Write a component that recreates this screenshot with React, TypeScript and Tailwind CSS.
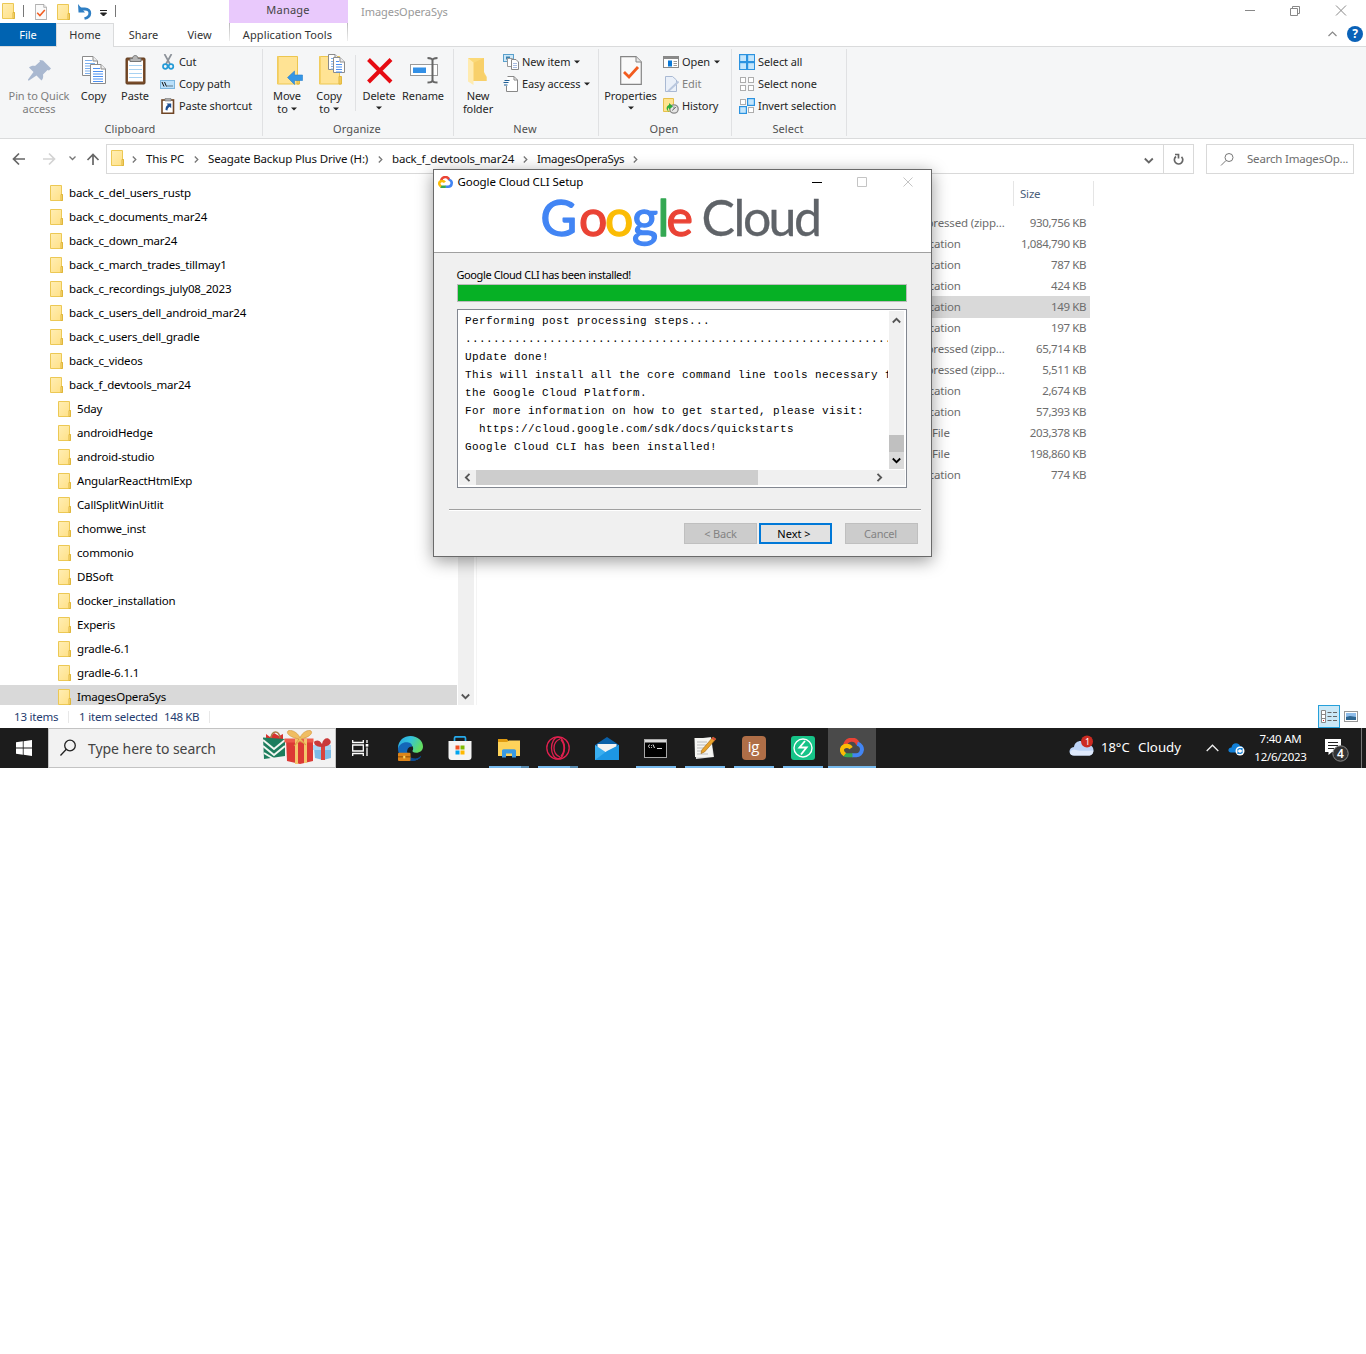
import React from "react";

type Kids = { children?: React.ReactNode };

/* ---------- icons ---------- */

const Folder = ({ className = "" }: { className?: string }) => (
  <svg width="13" height="16" viewBox="0 0 13 16" className={"shrink-0 " + className}>
    <defs>
      <linearGradient id="fold" x1="0" y1="0" x2="1" y2="1">
        <stop offset="0" stopColor="#ffeeb4" />
        <stop offset="1" stopColor="#ffe085" />
      </linearGradient>
    </defs>
    <path d="M.5.5h11v9h1v6H.5z" fill="url(#fold)" stroke="#ecc854" />
    <path d="M11 9.5v6h1.500v-6z" fill="#ffe089" stroke="#dfb63c" />
  </svg>
);

const Page = ({ x = 0, y = 0, w = 16, h = 20, line = "#7cb0ee" }: { x?: number; y?: number; w?: number; h?: number; line?: string }) => (
  <g transform={`translate(${x} ${y})`}>
    <path d={`M.5.5H${w - 5}L${w - 0.5} 5V${h - 0.5}H.5z`} fill="#fff" stroke="#8b8b8b" />
    <path d={`M${w - 5} .5V5H${w - 0.5}`} fill="#eee" stroke="#8b8b8b" />
    <path d={`M3 4.500H${w - 6}M3 7.500H${w - 3}M3 10H${w - 3}M3 12.500H${w - 3}M3 15H${w - 3}${h > 18 ? `M3 17.500H${w - 3}` : ""}`} stroke={line} />
  </g>
);

const CheckPage = ({ w, h }: { w: number; h: number }) => (
  <svg width={w} height={h} viewBox="0 0 22 29" className="shrink-0">
    <path d="M.7.7H16L21.3 6V28.3H.7z" fill="#fafafa" stroke="#858585" strokeWidth="1.2" />
    <path d="M16 .7V6h5.3" fill="#e8e8e8" stroke="#858585" />
    <path d="M4 16l5 5 9-10" fill="none" stroke="#f25c1f" strokeWidth="2.8" />
  </svg>
);

const BigFolder = ({ children }: Kids) => (
  <svg width="32" height="32" viewBox="0 0 32 32" className="overflow-visible">
    <path d="M6.500 1.500h20v20h2v7.500h-22z" fill="#ffe394" stroke="#ecc650" />
    <path d="M26 21.500v7.500h2.200v-7.500z" fill="#f9d264" stroke="#e0b53c" />
    <path d="M6.500 1.500h1.500v27.500h-1.500z" fill="#f6d26a" />
    {children}
  </svg>
);

const Pin = () => (
  <svg width="32" height="32" viewBox="0 0 32 32">
    <path d="M20 5l8 8-2 2-1.500-.5-4.500 4.500c.5 2.500 0 4.500-1.500 6l-5-5L6 25H5v-1l5.500-7.500-4.500-4.500c1.500-1.500 4-2 6-1.500l5-4.500-.5-1.500z" transform="translate(0 0.500)" fill="#a9b8d0" />
  </svg>
);
const CopyBig = () => (
  <svg width="32" height="32" viewBox="0 0 32 32">
    <Page x={4} y={1} w={16} h={20} />
    <Page x={12} y={9} w={16} h={20} line="#4d90f0" />
  </svg>
);
const PasteBig = () => (
  <svg width="32" height="32" viewBox="0 0 32 32">
    <rect x="7" y="3" width="19" height="26" rx="1" fill="#7a4d2b" stroke="#5f3a1d" />
    <path d="M9 5.500h15v21H9z" fill="#fff" />
    <path d="M10 10.500h13M10 14.500h13M10 18.500h13M10 22.500h13" stroke="#a8d2f2" />
    <path d="M11 3.500h2.500c0-4 5.500-4 5.500 0H22v3H11z" fill="#b5b5b5" stroke="#777" />
  </svg>
);
const Cut = () => (
  <svg width="16" height="16" viewBox="0 0 16 16">
    <path d="M4.500 0L10 10M11.500 0L6 10" stroke="#8c9299" strokeWidth="1.700" />
    <circle cx="5.300" cy="12.500" r="2.300" fill="none" stroke="#249bd7" strokeWidth="1.700" />
    <circle cx="11" cy="12.500" r="2.300" fill="none" stroke="#249bd7" strokeWidth="1.700" />
  </svg>
);
const CopyPath = () => (
  <svg width="16" height="16" viewBox="0 0 16 16">
    <rect x=".5" y="4.500" width="14" height="8" fill="#b9e0fb" stroke="#7cb6de" />
    <path d="M2 6l2 4.500M4.500 6l2 4.500" stroke="#111" />
    <path d="M7.500 10h1M9.500 10h1M11.500 10h1" stroke="#111" strokeWidth="1.200" />
  </svg>
);
const PasteShortcut = () => (
  <svg width="16" height="16" viewBox="0 0 16 16">
    <rect x="2" y="2" width="11.500" height="13.300" fill="#fff" stroke="#6f4525" strokeWidth="1.600" />
    <path d="M5 .5h6v2.500H5z" fill="#aaa" stroke="#777" strokeWidth=".6" />
    <path d="M5.500 12c0-3 1-4.500 2.500-5L6.500 5.500h4.700v4.700L9.700 8.700C8.300 9.500 7.500 10.500 7.500 12.500z" fill="#1c4f93" />
  </svg>
);
const MoveTo = () => (
  <BigFolder>
    <path d="M16.500 22.500l7-6.500v4h8v5.500h-8v4z" fill="#3496e6" stroke="#2a82cc" strokeWidth=".6" />
  </BigFolder>
);
const CopyTo = () => (
  <BigFolder>
    <Page x={15} y={-1} w={12} h={16} />
    <Page x={20} y={2} w={12} h={16} line="#4d90f0" />
  </BigFolder>
);
const DeleteX = () => (
  <svg width="32" height="32" viewBox="0 0 32 32">
    <path d="M5.500 4.500L28 27M28 4.500L5.500 27" stroke="#e60b12" strokeWidth="4" />
  </svg>
);
const Rename = () => (
  <svg width="32" height="32" viewBox="0 0 32 32">
    <rect x="3.500" y="9.500" width="27" height="11" fill="#fff" stroke="#999" />
    <rect x="6" y="12.500" width="13" height="5.500" fill="#3390e6" />
    <path d="M25.500 4v22M20.500 3c3 0 5 .5 5 2.500 0-2 2-2.500 5-2.500M20.500 27.500c3 0 5-.5 5-2.500 0 2 2 2.500 5 2.500" fill="none" stroke="#666" strokeWidth="2" />
  </svg>
);
const NewFolder = () => (
  <svg width="32" height="32" viewBox="0 0 32 32">
    <path d="M6 3h16v14l2.500 4.500V26H11z" fill="#fbd978" />
    <path d="M11 8l11-5v16l2.500 3v4H11z" fill="#f8d06a" />
    <path d="M6 3l5.500 4.500V30L6 26.500z" fill="#ffebb0" />
  </svg>
);
const NewItem = () => (
  <svg width="16" height="16" viewBox="0 0 16 16">
    <rect x=".5" y=".5" width="10" height="7" fill="#cde8f8" stroke="#5aa0cc" />
    <path d="M3 2.500h4v3H3z" fill="#3c82b0" />
    <path d="M4.500 4.500h5v8h-5z" fill="#fff" stroke="#999" />
    <path d="M8.500 5.500H13L15.500 8v7.500h-7z" fill="#fff" stroke="#888" />
    <path d="M10 9.500h4M10 11.500h4M10 13.500h4" stroke="#a8bce0" />
  </svg>
);
const EasyAccess = () => (
  <svg width="16" height="16" viewBox="0 0 16 16">
    <path d="M4.500.5H11L14.500 4v11.500h-11V10" fill="#fff" stroke="#888" />
    <path d="M11 .5V4h3.500" fill="none" stroke="#888" />
    <path d="M1.500 4.500h5M.5 6.500h5M1 9h3.500" stroke="#1f5f96" strokeWidth="1.200" />
  </svg>
);
const OpenIcon = () => (
  <svg width="16" height="16" viewBox="0 0 16 16">
    <rect x=".5" y="2.500" width="15" height="11" fill="#fff" stroke="#888" />
    <path d="M1 3h14v2H1z" fill="#8a8a8a" />
    <path d="M5 6.500h4v6H5z" fill="#0a78d6" />
    <path d="M10.500 7.500H14M10.500 9.500H14M10.500 11.500H14" stroke="#999" />
  </svg>
);
const EditIcon = () => (
  <svg width="16" height="16" viewBox="0 0 16 16">
    <path d="M2.500.5h7L13.500 4v11.500h-11z" fill="#eaf0f9" stroke="#a9b9d3" />
    <path d="M15.500 5.500L6.500 14l-1.500 1" stroke="#b9c7de" strokeWidth="2" />
  </svg>
);
const HistoryIcon = () => (
  <svg width="16" height="16" viewBox="0 0 16 16">
    <path d="M.5.5h10v13H.5z" fill="#ffe38f" stroke="#e6c04b" />
    <circle cx="11" cy="11" r="4.200" fill="#e6e6e6" stroke="#8a8a8a" strokeWidth="1.300" />
    <path d="M11 8.500V11l-2 1.500M11 11l2-2" fill="none" stroke="#777" />
    <path d="M6.500 14C2.500 12 3 8 6 7V5l4 3.500L6 11.500v-2c-1.500 1-1.500 3 .5 4.500z" fill="#2fae3b" />
  </svg>
);
const Tiles = ({ on, joined }: { on: number[]; joined?: boolean }) => (
  <svg width="16" height="16" viewBox="0 0 16 16">
    {[0, 1, 2, 3].map((i) => {
      const x = (i % 2) * 8;
      const y = Math.floor(i / 2) * 8;
      const lit = on.includes(i);
      return lit ? (
        <rect key={i} x={x + 0.6} y={y + 0.6} width={joined ? 7 : 6.8} height={joined ? 7 : 6.8} fill="#c5e6fc" stroke="#2c93e0" strokeWidth="1.200" />
      ) : (
        <rect key={i} x={x + 1.5} y={y + 1.5} width="5" height="5" fill="#fff" stroke="#adadad" />
      );
    })}
  </svg>
);

const Caret = ({ className = "" }: { className?: string }) => (
  <svg width="6" height="4" viewBox="0 0 6 4" className={className}>
    <path d="M0 .5h6l-3 3z" fill="#222" />
  </svg>
);

const Chevron = ({ d, w = 9, h = 9, color = "#555", sw = 1.8 }: { d: string; w?: number; h?: number; color?: string; sw?: number }) => (
  <svg width={w} height={h} viewBox={`0 0 ${w} ${h}`} className="shrink-0">
    <path d={d} fill="none" stroke={color} strokeWidth={sw} />
  </svg>
);

const GCloud = ({ s }: { s: number }) => (
  <svg width={s} height={s * 0.82} viewBox="0 0 25 20.500">
    <g fill="none" strokeWidth="4.200">
      <path d="M5.200 8.500C6.300 0 16.500-.3 18.800 6.600" stroke="#ea4335" />
      <path d="M18 6c3.700 1 5.200 4 4.800 6.500-.4 3.200-2.800 5.400-5.800 5.400h-4.500" stroke="#4285f4" />
      <path d="M13 18H7.500c-1.200 0-2-.2-3-.8" stroke="#34a853" />
      <path d="M5 17.400C-.2 13.500 2 8.300 7 8.200c2 0 3.500.8 4.500 2.300" stroke="#fbbc05" />
    </g>
  </svg>
);

/* ---------- ribbon ---------- */

const Big = ({ icon, lines, drop, w, dim }: { icon: React.ReactNode; lines: string[]; drop?: boolean; w: string; dim?: boolean }) => (
  <div className={"flex flex-col items-center " + w}>
    <div className="mb-0.5 h-8">{icon}</div>
    {lines.map((l, i) => (
      <div key={i} className={"flex items-center whitespace-nowrap leading-[13px] " + (dim ? "text-[#7d7d7d]" : "")}>
        {l}
        {drop && i === 1 && <Caret className={l ? "ml-[3px]" : "mt-1"} />}
      </div>
    ))}
  </div>
);

const Small = ({ icon, text, drop, dim }: { icon: React.ReactNode; text: string; drop?: boolean; dim?: boolean }) => (
  <div className="flex h-[22px] items-center whitespace-nowrap">
    {icon}
    <span className={"ml-[3px] " + (dim ? "text-[#808080]" : "")}>{text}</span>
    {drop && <Caret className="ml-1" />}
  </div>
);

const Group = ({ label, w, children }: Kids & { label: string; w: string }) => (
  <div className={"flex shrink-0 " + w}>
    <div className="flex flex-1 flex-col">
      <div className="flex h-[74px]">{children}</div>
      <div className="pr-0.5 text-center leading-4 tracking-[0.1px] text-[#505050]">{label}</div>
    </div>
    <div className="mt-0.5 h-[87px] w-px bg-[#e0e1e3]" />
  </div>
);

const Stack = ({ children, className = "" }: Kids & { className?: string }) => <div className={"flex flex-col pt-1 " + className}>{children}</div>;

const Ribbon = () => (
  <div className="flex h-[92px] border-b border-[#dadbdc] bg-[#f5f6f7] text-[11px] tracking-[-0.1px] text-[#262626]">
    <Group label="Clipboard" w="w-[263px]">
      <div className="flex pt-2">
        <Big w="ml-1 w-[70px]" icon={<Pin />} lines={["Pin to Quick", "access"]} dim />
        <Big w="w-[39px]" icon={<CopyBig />} lines={["Copy"]} />
        <Big w="ml-px w-[42px]" icon={<PasteBig />} lines={["Paste"]} />
      </div>
      <Stack className="ml-1">
        <Small icon={<Cut />} text="Cut" />
        <Small icon={<CopyPath />} text="Copy path" />
        <Small icon={<PasteShortcut />} text="Paste shortcut" />
      </Stack>
    </Group>
    <Group label="Organize" w="w-[191px]">
      <div className="flex pt-2">
        <Big w="ml-[3px] w-[42px]" icon={<MoveTo />} lines={["Move", "to"]} drop />
        <Big w="w-[42px]" icon={<CopyTo />} lines={["Copy", "to"]} drop />
        <div className="ml-[5px] h-[56px] w-px bg-[#e0e1e3]" />
        <Big w="ml-px w-11" icon={<DeleteX />} lines={["Delete", ""]} drop />
        <Big w="w-11" icon={<Rename />} lines={["Rename"]} />
      </div>
    </Group>
    <Group label="New" w="w-[145px]">
      <div className="flex pt-2">
        <Big w="ml-[3px] w-[42px]" icon={<NewFolder />} lines={["New", "folder"]} />
      </div>
      <Stack className="ml-1">
        <Small icon={<NewItem />} text="New item" drop />
        <Small icon={<EasyAccess />} text="Easy access" drop />
      </Stack>
    </Group>
    <Group label="Open" w="w-[133px]">
      <div className="flex pt-2">
        <Big w="ml-[3px] w-[57px] mr-px" icon={<div className="pt-px"><CheckPage w={22} h={29} /></div>} lines={["Properties", ""]} drop />
      </div>
      <Stack className="ml-[3px]">
        <Small icon={<OpenIcon />} text="Open" drop />
        <Small icon={<EditIcon />} text="Edit" dim />
        <Small icon={<HistoryIcon />} text="History" />
      </Stack>
    </Group>
    <Group label="Select" w="w-[115px]">
      <Stack className="ml-[7px]">
        <Small icon={<Tiles on={[0, 1, 2, 3]} joined />} text="Select all" />
        <Small icon={<Tiles on={[]} />} text="Select none" />
        <Small icon={<Tiles on={[1, 2]} />} text="Invert selection" />
      </Stack>
    </Group>
  </div>
);

/* ---------- title + tabs ---------- */

const TitleBar = () => (
  <div className="flex h-[23px] text-[11px]">
    <div className="flex w-[229px] items-start pl-0.5 pt-[3px]">
      <Folder />
      <div className="ml-2 mt-0.5 h-3 w-px bg-[#777]" />
      <div className="ml-[11px] mt-px"><CheckPage w={12} h={16} /></div>
      <Folder className="ml-[10px] mt-px" />
      <svg width="14" height="16" viewBox="0 0 14 16" className="ml-2 mt-px">
        <path d="M2 5h5c6.500 0 6.500 8-.5 9.500" fill="none" stroke="#2f7fc4" strokeWidth="2.800" />
        <path d="M0 0l.5 8.500H7z" fill="#2f7fc4" />
      </svg>
      <svg width="7" height="7" viewBox="0 0 7 7" className="ml-2 mt-[7px]">
        <path d="M0 .5h7M.5 3h6l-3 3z" stroke="#222" strokeWidth="1" fill="#222" />
      </svg>
      <div className="ml-2 mt-0.5 h-3 w-px bg-[#777]" />
    </div>
    <div className="w-[119px] bg-[#e9c9fc] pr-px text-center leading-[20px] tracking-[0.2px] text-[#444]">Manage</div>
    <div className="flex-1 pl-[13px] leading-6 tracking-[-0.05px] text-[#999]">ImagesOperaSys</div>
    <div className="flex w-[126px] items-start pt-[5px]">
      <svg width="110" height="12" viewBox="0 0 110 12" fill="none" stroke="#888">
        <path d="M5 5.500h10M50.500 3.500h7v7h-7zM52.500 3V1.500h7v7H58M96 .5l10 10M106 .5l-10 10" />
      </svg>
    </div>
  </div>
);

const Tabs = () => (
  <div className="flex h-6 border-b border-[#dadbdc] text-[11px] leading-6 text-[#333]">
    <div className="h-[23px] w-14 bg-[#0063b1] text-center text-white">File</div>
    <div className="z-10 h-6 w-[58px] border-x border-t border-[#dadbdc] bg-[#f5f6f7] text-center leading-[22px]">Home</div>
    <div className="w-[59px] text-center">Share</div>
    <div className="w-[53px] text-center">View</div>
    <div className="ml-[3px] flex h-[18px] w-[119px] justify-between">
      <div className="w-px bg-gradient-to-b from-[#bbb] to-[#eee]" />
      <span className="whitespace-nowrap pr-0.5 tracking-[0.1px]">Application Tools</span>
      <div className="w-px bg-gradient-to-b from-[#bbb] to-[#eee]" />
    </div>
    <div className="ml-auto flex items-start pt-[3px]">
      <div className="mr-[10px] mt-1"><Chevron d="M.5 6l4-4 4 4" color="#888" sw={1.2} /></div>
      <div className="mr-[3px] h-4 w-4 rounded-full bg-[#0a62b8] text-center text-[12px] font-bold leading-4 text-white">?</div>
    </div>
  </div>
);

/* ---------- address bar ---------- */

const Sep = ({ className = "" }: { className?: string }) => (
  <svg width="5" height="7" viewBox="0 0 5 7" className={"shrink-0 " + className}>
    <path d="M.8.5l3 3-3 3" fill="none" stroke="#777" strokeWidth="1.300" />
  </svg>
);

const AddressBar = () => (
  <div className="flex h-[42px] items-start pt-[5px] text-[11.500px] tracking-[-0.15px] text-[#111]">
    <div className="flex h-[30px] w-[106px] shrink-0 items-center">
      <svg width="106" height="30" viewBox="0 0 106 30" fill="none">
        <path d="M25 15H14M19 9.500L13.500 15l5.500 5.500" stroke="#666" strokeWidth="1.700" />
        <path d="M43 15h11M49 9.500l5.500 5.500-5.500 5.500" stroke="#d3d3d3" strokeWidth="1.700" />
        <path d="M69.500 12.500l3 3 3-3" stroke="#777" strokeWidth="1.300" />
        <path d="M93 21V10.500M87.500 16l5.500-5.500 5.500 5.500" stroke="#666" strokeWidth="1.700" />
      </svg>
    </div>
    <div className="flex h-[30px] w-[1088px] shrink-0 items-center whitespace-nowrap border border-[#d9d9d9] pl-1">
      <Folder className="-mt-0.5" />
      <Sep className="ml-2" />
      <span className="ml-[9px] w-[39px]">This PC</span>
      <Sep className="ml-[9px]" />
      <span className="ml-[9px] w-[161px]">Seagate Backup Plus Drive (H:)</span>
      <Sep className="ml-[9px]" />
      <span className="ml-[9px] w-[122px]">back_f_devtools_mar24</span>
      <Sep className="ml-[9px]" />
      <span className="ml-[9px] w-[87px] tracking-[-0.3px]">ImagesOperaSys</span>
      <Sep className="ml-[9px]" />
      <div className="ml-auto mt-0.5"><Chevron d="M.8 2.500l4 4 4-4" w={10} color="#666" /></div>
      <div className="ml-[9px] h-[28px] w-px bg-[#d9d9d9]" />
      <svg width="29" height="28" viewBox="0 0 29 28" fill="none">
        <path d="M12 11.500a4.200 4.200 0 1 0 5.500.3M11 9.500h3.500v4" stroke="#666" strokeWidth="1.700" />
      </svg>
    </div>
    <div className="ml-3 flex h-[30px] w-[148px] items-center whitespace-nowrap border border-[#d9d9d9] text-[#6d6d6d]">
      <svg width="40" height="28" viewBox="0 0 40 28" fill="none" stroke="#777">
        <circle cx="22" cy="12.500" r="4" />
        <path d="M19 15.500l-5 5" />
      </svg>
      <span className="tracking-[-0.200px]">Search ImagesOp...</span>
    </div>
  </div>
);

/* ---------- body ---------- */

const parents = [
  "back_c_del_users_rustp", "back_c_documents_mar24", "back_c_down_mar24", "back_c_march_trades_tillmay1",
  "back_c_recordings_july08_2023", "back_c_users_dell_android_mar24", "back_c_users_dell_gradle", "back_c_videos", "back_f_devtools_mar24",
];
const kids = [
  "5day", "androidHedge", "android-studio", "AngularReactHtmlExp", "CallSplitWinUitlit", "chomwe_inst", "commonio",
  "DBSoft", "docker_installation", "Experis", "gradle-6.1", "gradle-6.1.1", "ImagesOperaSys",
];

const Tree = () => (
  <div className="h-[524px] w-[457px] shrink-0 overflow-hidden text-[11.500px] tracking-[-0.17px] text-black">
    {parents.map((n) => (
      <div key={n} className="flex h-6 items-center pl-[50px]">
        <Folder />
        <span className="ml-1.5">{n}</span>
      </div>
    ))}
    {kids.map((n, i) => (
      <div key={n} className={"flex h-6 items-center pl-[58px] " + (i === kids.length - 1 ? "bg-[#d9d9d9]" : "")}>
        <Folder />
        <span className="ml-1.5">{n}</span>
      </div>
    ))}
  </div>
);

const files: [string, string][] = [
  ["Compressed (zipp...", "930,756 KB"], ["Application", "1,084,790 KB"], ["Application", "787 KB"], ["Application", "424 KB"],
  ["Application", "149 KB"], ["Application", "197 KB"], ["Compressed (zipp...", "65,714 KB"], ["Compressed (zipp...", "5,511 KB"],
  ["Application", "2,674 KB"], ["Application", "57,393 KB"], ["File", "203,378 KB"], ["File", "198,860 KB"], ["Application", "774 KB"],
];

const FileList = () => (
  <div className="ml-auto w-[486px] text-[11.500px] text-[#6d6d6d]">
    <div className="flex h-[25px] items-center text-[#4c607a]">
      <div className="ml-[133px] h-full w-px bg-[#e5e5e5]" />
      <span className="w-[79px] pl-1.5 tracking-[-0.2px]">Size</span>
      <div className="h-full w-px bg-[#e5e5e5]" />
    </div>
    <div className="mt-1.5 w-[210px]">
      {files.map(([t, s], i) => (
        <div key={i} className={"flex h-[21px] items-center whitespace-nowrap pr-1 " + (i === 4 ? "bg-[#d9d9d9] shadow-[0_1px_0_#d9d9d9]" : "")}>
          <span className={"tracking-[-0.17px] " + (t === "File" ? "ml-[52px]" : "ml-[22px]")}>{t}</span>
          <span className="ml-auto tracking-[-0.4px]">{s}</span>
        </div>
      ))}
    </div>
  </div>
);

const StatusBar = () => (
  <div className="flex h-[23px] items-center text-[11.500px] tracking-[-0.2px] text-[#1e3a6e]">
    <span className="ml-3.5 w-[44px] whitespace-nowrap">13 items</span>
    <div className="ml-2.5 h-3 w-px bg-[#e8e8e8]" />
    <span className="ml-2.5 w-[79px] whitespace-nowrap">1 item selected</span>
    <span className="ml-1.5 whitespace-nowrap tracking-[-0.350px]">148 KB</span>
    <div className="ml-2.5 h-3 w-px bg-[#e8e8e8]" />
    <div className="ml-auto flex h-full w-[22px] items-center justify-center border border-[#26a0da] bg-[#cbe8f6]">
      <svg width="16" height="14" viewBox="0 0 16 14" fill="none">
        <path d="M.5.5h4v12h-4zM.5 4.500h4M.5 8.500h4" stroke="#888" fill="#fff" />
        <path d="M6.500 2.500h4M12 2.500h4M6.500 6.500h4M12 6.500h4M6.500 10.500h4M12 10.500h4" stroke="#666" />
        <path d="M2 10.500h1" stroke="#e02020" />
      </svg>
    </div>
    <svg width="14" height="12" viewBox="0 0 14 12" className="ml-1 mr-2">
      <rect x=".5" y=".5" width="13" height="10" fill="#fff" stroke="#999" />
      <path d="M2 2h10v4H2z" fill="#8fbdea" />
      <path d="M2 6l4-1 6 1v3H2z" fill="#2f6690" />
    </svg>
  </div>
);

/* ---------- installer dialog ---------- */

const Logo = () => (
  <svg width="290" height="64" viewBox="0 0 290 64" fontFamily="Lato, sans-serif" fontSize="50" className="overflow-visible">
    <g strokeWidth="1.300" strokeLinejoin="round">
      <text x="2.500" y="50" fill="#4285f4" stroke="#4285f4">G</text>
      <text x="41" y="50" fill="#ea4335" stroke="#ea4335">o</text>
      <text x="67" y="50" fill="#fbbc05" stroke="#fbbc05">o</text>
      <text x="94" y="50" fill="#4285f4" stroke="#4285f4">g</text>
      <text x="119.500" y="50" fill="#34a853" stroke="#34a853">l</text>
      <text x="128.500" y="50" fill="#ea4335" stroke="#ea4335">e</text>
    </g>
    <text x="163.500 195.500 205 230.500 256" y="50" fill="#5f6368" stroke="#5f6368" strokeWidth=".3">Cloud</text>
  </svg>
);

const log = [
  "Performing post processing steps...",
  "..............................................................",
  "Update done!",
  "This will install all the core command line tools necessary for",
  "the Google Cloud Platform.",
  "For more information on how to get started, please visit:",
  "  https://cloud.google.com/sdk/docs/quickstarts",
  "Google Cloud CLI has been installed!",
];

const Dialog = () => (
  <div className="absolute left-[433px] top-[169px] flex h-[388px] w-[499px] flex-col border border-[#6a6a6a] bg-[#f0f0f0] shadow-[0_4px_16px_rgba(0,0,0,0.4)]">
    <div className="h-[83px] border-b border-[#a0a0a0] bg-white">
      <div className="flex h-6 items-center pl-[3.500px] text-[11.500px] text-black">
        <GCloud s={15} />
        <span className="ml-[5px] tracking-[-0.080px]">Google Cloud CLI Setup</span>
        <svg width="102" height="12" viewBox="0 0 102 12" className="ml-auto mr-[17px]" fill="none">
          <path d="M0 6.500h10" stroke="#000" />
          <path d="M45.500 1.500h9v9h-9zM91.500 1.500l9 9M100.500 1.500l-9 9" stroke="#c4c4c4" />
        </svg>
      </div>
      <div className="-mt-2 ml-[104px]"><Logo /></div>
    </div>
    <div className="ml-[22.500px] mt-[14px] text-[11px] leading-4 tracking-[-0.400px] text-black">Google Cloud CLI has been installed!</div>
    <div className="ml-[23px] mt-px h-[18px] w-[450px] border border-[#bcbcbc] bg-[#06b025]" />
    <div className="ml-[23px] mt-[7px] flex h-[179px] w-[450px] flex-col border border-[#828790] bg-white p-px">
      <div className="flex h-[159px]">
        <div className="w-[429px] shrink-0 overflow-hidden pl-1.5 pt-px font-['Liberation_Mono',monospace] text-[11px] leading-[18px] tracking-[0.4px] text-black">
          {log.map((l, i) => (
            <div key={i} className="whitespace-pre">{l}</div>
          ))}
        </div>
        <div className="ml-px flex h-[158px] w-[15px] flex-col items-center bg-[#f0f0f0]">
          <div className="flex h-[17px] items-center pt-px"><Chevron d="M.8 6.500l3.700-3.700 3.700 3.700" /></div>
          <div className="mt-auto h-[17px] w-full bg-[#c0c0c0]" />
          <div className="flex h-[17px] w-full items-center justify-center bg-[#dadada]"><Chevron d="M.8 2.500l3.700 3.700 3.700-3.700" color="#000" /></div>
        </div>
      </div>
      <div className="flex h-[15px] w-[446px] items-center bg-[#f0f0f0]">
        <div className="flex w-[17px] justify-center pr-px"><Chevron d="M6.500.8L2.800 4.500l3.700 3.700" /></div>
        <div className="h-[15px] w-[282px] bg-[#cdcdcd]" />
        <div className="ml-auto mr-[21px]"><Chevron d="M2.500.8l3.700 3.700-3.700 3.700" /></div>
      </div>
    </div>
    <div className="ml-[15px] mt-[21px] h-0.5 w-[472px] border-b border-white bg-[#a0a0a0]" />
    <div className="mt-3 flex pl-[250px] text-center text-[11px] leading-[20px] tracking-[-0.200px] text-[#838383]">
      <div className="h-[21px] w-[73px] border border-[#bfbfbf] bg-[#cccccc]">&lt; Back</div>
      <div className="ml-0.5 h-[21px] w-[73px] border-2 border-[#0078d7] bg-[#e1e1e1] pr-[3px] leading-[18px] tracking-normal text-black">Next &gt;</div>
      <div className="ml-[13px] h-[21px] w-[73px] border border-[#bfbfbf] bg-[#cccccc] pr-0.5">Cancel</div>
    </div>
  </div>
);

/* ---------- taskbar ---------- */

const Slot = ({ children, run, split, active }: Kids & { run?: boolean; split?: boolean; active?: boolean }) => (
  <div className={"flex h-10 flex-col items-center " + (active ? "ml-px w-12 bg-[#4a4a4a]" : "w-[49px]")}>
    <div className="flex h-[38px] items-center pt-0.5">{children}</div>
    {run && (
      <div className={"flex h-0.5 bg-[#76b9ed] " + (active ? "w-12" : "w-10")}>
        {split && <div className="ml-auto h-0.5 w-2 bg-[#5689ae]" />}
      </div>
    )}
  </div>
);

const Gifts = () => (
  <svg width="70" height="36" viewBox="0 0 70 36">
    <path d="M4 4l4 3 4-4 5 3 4-2v6H4z" fill="#d8322e" />
    <path d="M9 8c1-8 8-8 9 0" fill="none" stroke="#a87b45" strokeWidth="1.500" />
    <path d="M1 7.500l22 1.500v17L2 29z" fill="#1d7d5d" />
    <path d="M1 10l11 9L23 10M1 16l11 9 11-9M2 23l10 6" fill="none" stroke="#f1f6f0" strokeWidth="2" />
    <path d="M24 9h27v22l-13 3-13-3z" fill="#dc3a35" />
    <path d="M22.500 8.500h29v4h-29z" fill="#ee5a4b" />
    <path d="M33 9h3v25h-3zM42 9h3v24h-3z" fill="#f3c66b" />
    <path d="M37 9C27 7 24 3 26 1s10 1 12 7c2-6 9-9 11-7s-1 6-10 8l5 6-6-4-6 5z" fill="#f0bd62" stroke="#d69a3f" strokeWidth=".7" />
    <path d="M52 18h17v10l-8 2-8-2z" fill="#7dbbe6" />
    <path d="M51 15h18v5H51z" fill="#a9d6f2" />
    <path d="M59 15h4v15h-4z" fill="#d9433c" />
    <path d="M60 17c-8 0-9-5-7-6s5-1 7 3c1-6 6-7 8-4s0 6-8 7z" fill="#c93a3a" />
  </svg>
);

const Edge = () => (
  <svg width="25" height="25" viewBox="0 0 24 24">
    <defs>
      <linearGradient id="edgeTop" x1="0" y1="0" x2="1" y2=".4">
        <stop offset="0" stopColor="#2aa6e0" />
        <stop offset=".5" stopColor="#34c3dc" />
        <stop offset="1" stopColor="#62dd62" />
      </linearGradient>
    </defs>
    <path d="M0 12C0 4 6 0 12 0c7 0 12 5 12 10 0 4-3 6-6.500 6-3 0-4-1-3.500-2 1.500-2 0-6-4-6-5 0-9 3-10 6z" fill="url(#edgeTop)" />
    <path d="M0 12c1-4 5-6.500 9-6 3 .3 5 2.500 4.500 4C10 10 8 13 9 17c1 3 4 5 8 5 2 0 4-1 5-2-2 3-6 4-10 4C5 24 0 19 0 12z" fill="#1467b8" />
    <path d="M9 15c0 4 4 7 8 6.500 3-.3 4-1.500 5-2.500 1 1-3 5-9 5-4 0-6-5-4-9z" fill="#0c4a92" />
    <rect x="0" y="16" width="12" height="8" rx="1" fill="#dd8419" />
    <path d="M0 20h12" stroke="#8f4d08" />
    <rect x="5" y="19" width="2" height="2.500" fill="#ffd257" />
  </svg>
);

const Taskbar = () => (
  <div className="flex h-10 items-center bg-[#1c1c1c] text-white">
    <div className="flex w-12 justify-center">
      <svg width="16" height="16" viewBox="0 0 16 16" fill="#fff">
        <path d="M0 2.200l6.800-.9v6.200H0zM7.600 1.200L16 0v7.500H7.600zM0 8.400h6.800v6.300L0 13.800zM7.600 8.400H16V16l-8.400-1.200z" />
      </svg>
    </div>
    <div className="flex h-10 w-[288px] items-center border border-[#c3c3c3] bg-[#f2f2f2]">
      <svg width="18" height="18" viewBox="0 0 18 18" className="ml-[10px]" fill="none" stroke="#222" strokeWidth="1.300">
        <circle cx="11" cy="6.500" r="5.300" />
        <path d="M7.300 10.300L1.500 16.500" />
      </svg>
      <span className="ml-[11px] whitespace-nowrap text-[14px] tracking-[-0.050px] text-[#444]">Type here to search</span>
      <div className="ml-auto mr-[3px]"><Gifts /></div>
    </div>
    <div className="flex w-[50px] justify-center pr-px">
      <svg width="17" height="16" viewBox="0 0 17 16" fill="none" stroke="#fff" strokeWidth="1.300">
        <path d="M.7 0v2.500h10.600V0M.7 16v-2.500h10.600V16M.7 5h10.600v6H.7zM15 0v3M15 7.500V16" />
        <path d="M13.700 4h2.600v2.600h-2.600z" fill="#fff" stroke="none" />
      </svg>
    </div>
    <Slot><Edge /></Slot>
    <Slot>
      <svg width="24" height="24" viewBox="0 0 24 24">
        <path d="M6.500 6V2.200c0-1 .5-1.400 1.300-1.400h8.400c.8 0 1.300.4 1.300 1.400V6" fill="none" stroke="#26a9ea" strokeWidth="1.700" />
        <path d="M.5 5h23v16c0 2-1 3-3 3h-17c-2 0-3-1-3-3z" fill="#f4f4f4" />
        <path d="M7.500 9.500h4v4h-4z" fill="#f25022" /><path d="M12.500 9.500h4v4h-4z" fill="#7fba00" />
        <path d="M7.500 14.500h4v4h-4z" fill="#00a4ef" /><path d="M12.500 14.500h4v4h-4z" fill="#ffb900" />
      </svg>
    </Slot>
    <Slot run split>
      <svg width="22" height="19" viewBox="0 0 22 19">
        <path d="M0 0h9l1.500 2H22v3H0z" fill="#e09b10" />
        <path d="M0 3h9l2-1.500h11V17H0z" fill="#fed35a" />
        <path d="M4 18.500v-6.500c0-1 .6-1.700 1.700-1.700h10.600c1 0 1.700.7 1.700 1.700v6.500h-4v-4H8v4z" fill="#3a9be3" />
      </svg>
    </Slot>
    <Slot run split>
      <svg width="24" height="24" viewBox="0 0 24 24" fill="none" stroke="#e0204e" strokeWidth="1.300">
        <circle cx="12" cy="12" r="11.200" />
        <ellipse cx="12" cy="12" rx="6.500" ry="10.800" />
        <path d="M14 3c-4 1.500-6 5-6 9s2 7.500 6 9" /><path d="M15 4c4 4 4 12 0 16" />
      </svg>
    </Slot>
    <Slot>
      <svg width="24" height="23" viewBox="0 0 24 23">
        <path d="M0 8l12-8 12 8v6H0z" fill="#0a60a8" />
        <path d="M2.500 7h19v8h-19z" fill="#f3f3f3" />
        <path d="M0 8l12 8L24 8v15H0z" fill="#39aef0" />
        <path d="M0 23l12-9 12-6v15z" fill="#1d97e4" />
      </svg>
    </Slot>
    <Slot run>
      <svg width="23" height="19" viewBox="0 0 23 19">
        <rect x=".5" y=".5" width="22" height="18" fill="#000" stroke="#a8a8a8" />
        <path d="M1 1h21v2.500H1z" fill="#d8d8d8" />
        <path d="M6 6c-2-.5-2 3 0 2.500M7.500 6v.8M7.500 8v.8M9 5.500l1.500 3.500M13 9.500h5" stroke="#ddd" fill="none" />
      </svg>
    </Slot>
    <Slot run>
      <svg width="24" height="24" viewBox="0 0 24 24">
        <path d="M2 3l16-2 3 20-18 2z" fill="#ddd" />
        <path d="M1.500 2H18l2 19H2z" fill="#f5f5f2" />
        <path d="M4 6h10M4 9h9M4 12h7M4 15h5M4 18h11" stroke="#bbb" />
        <path d="M20 1l3 2-11.500 13L8 17.500l.8-3.500z" fill="#e9a32c" stroke="#9c6413" strokeWidth=".6" />
        <path d="M20 1l3 2-1.500 1.700-3-2.200z" fill="#d24b3d" />
      </svg>
    </Slot>
    <Slot run>
      <div className="h-6 w-6 rounded bg-[#af6e47] text-center font-['Open_Sans',sans-serif] text-[15px] font-medium leading-[21px] tracking-[-0.300px]">ig</div>
    </Slot>
    <Slot run>
      <svg width="24" height="24" viewBox="0 0 24 24">
        <rect width="24" height="24" rx="3" fill="#17c388" />
        <circle cx="12" cy="12" r="9" fill="none" stroke="#fff" strokeWidth="1.400" />
        <path d="M14 5l-5.500 6.500h7L10 18.500" fill="none" stroke="#fff" strokeWidth="1.900" />
      </svg>
    </Slot>
    <Slot run active><GCloud s={24} /></Slot>
    <div className="ml-auto flex h-10 w-[297px] items-center">
      <svg width="26" height="22" viewBox="0 0 26 22" className="-mt-1">
        <path d="M5 20.500c-6 0-6-8 0-8.500 1-7 10-8 12-2 5-1 7.500 2 7.500 5.500 0 3-2 5-5 5z" fill="#bcd3f6" />
        <path d="M5 20.500c-5 0-5.500-5 0-6 5 2 13 1 19.300 1 0 3-2 5-4.800 5z" fill="#dfe9fb" />
        <circle cx="18" cy="6.500" r="6" fill="#cc2b22" />
        <text x="16" y="10" fontSize="9" fill="#fff">1</text>
      </svg>
      <span className="ml-1.5 w-[30px] whitespace-nowrap text-[13px]">18°C</span>
      <span className="ml-[7px] w-[46px] whitespace-nowrap text-[13.300px]">Cloudy</span>
      <div className="ml-[22px]"><Chevron d="M.7 8L6.500 2.200 12.300 8" w={13} h={10} color="#eee" sw={1.3} /></div>
      <svg width="17" height="14" viewBox="0 0 17 14" className="ml-[9px] mt-0.5">
        <path d="M3 10.500C-1 10 0 5.500 3.500 5.500 4 0 11 0 12 4c3 0 4 2 3.500 6.500z" fill="#1180d8" />
        <circle cx="12" cy="9" r="4.500" fill="#fff" />
        <path d="M9.500 8.500a2.600 2.600 0 0 1 4.500-1V6M14.500 9.500a2.600 2.600 0 0 1-4.500 1V12" fill="none" stroke="#1180d8" strokeWidth="1.200" />
      </svg>
      <div className="ml-[7px] w-[58px] whitespace-nowrap pr-px text-center text-[11.500px] leading-[18px] tracking-[-0.250px]">
        <div>7:40 AM</div>
        <div>12/6/2023</div>
      </div>
      <svg width="26" height="26" viewBox="0 0 26 26" className="ml-[14px] mt-1">
        <path d="M1 2h16v13H8l-3.500 3v-3H1z" fill="#fff" />
        <path d="M4 5.500h10M4 8.500h10M4 11.500h6" stroke="#222" />
        <circle cx="16.500" cy="16.500" r="7.700" fill="#333" stroke="#888" />
        <text x="13" y="21" fontSize="12" fontWeight="600" fill="#fff">4</text>
      </svg>
      <div className="ml-auto mr-1 h-10 w-px bg-[#777]" />
    </div>
  </div>
);

export default function App() {
  return (
    <div className="relative h-[1354px] w-[1366px] overflow-hidden bg-white font-['Noto_Sans',sans-serif]">
      <TitleBar />
      <Tabs />
      <Ribbon />
      <AddressBar />
      <div className="flex h-[524px]">
        <Tree />
        <div className="ml-px flex w-4 items-end justify-center bg-[#f0f0f0] pb-1 pr-px">
          <Chevron d="M.8 2.500l3.700 3.700 3.700-3.700" />
        </div>
        <div className="ml-0.5 w-px bg-[#f4f4f4]" />
        <FileList />
      </div>
      <StatusBar />
      <Taskbar />
      <Dialog />
    </div>
  );
}
